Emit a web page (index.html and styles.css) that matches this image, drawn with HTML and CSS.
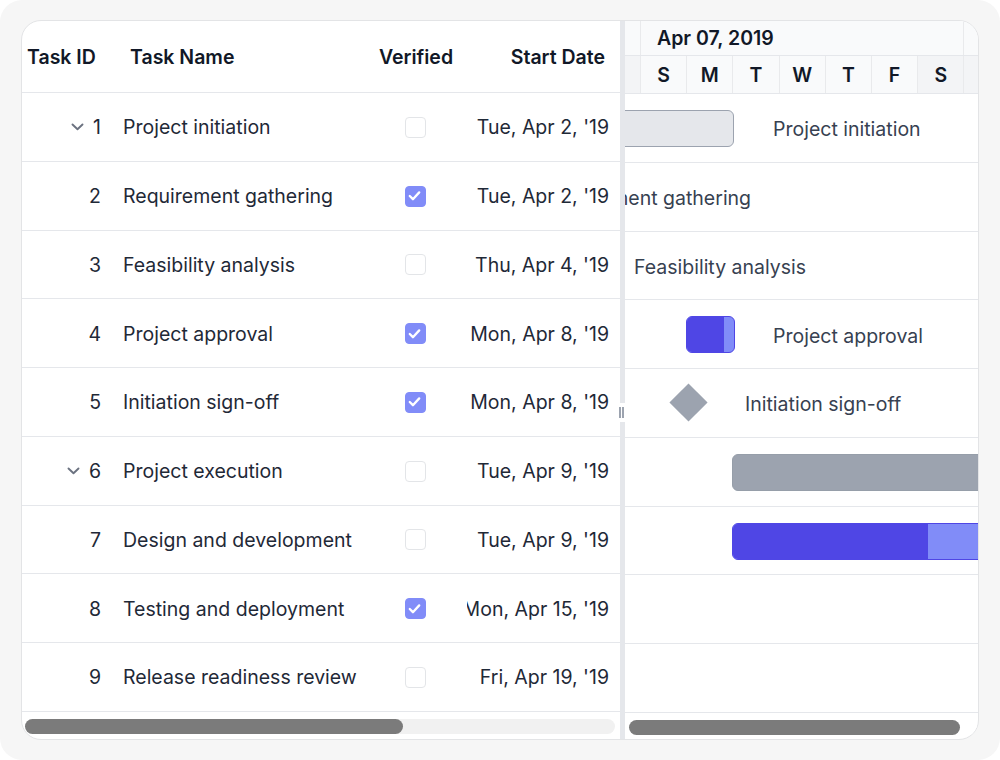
FILE: index.html
```html
<!DOCTYPE html>
<html lang="en">
<head>
<meta charset="UTF-8">
<meta name="viewport" content="width=device-width, initial-scale=1.0">
<title>Project Gantt</title>
<link rel="stylesheet" href="styles.css">
</head>
<body>
    <div class="frame">
        <div class="gantt">
            <div class="grid-pane">
                <div class="grid-head">
                    <div class="col-id">Task ID</div>
                    <div class="col-name">Task Name</div>
                    <div class="col-check">Verified</div>
                    <div class="col-date">Start Date</div>
                </div>

                <div class="grid-row">
                    <div class="col-id"><svg class="chevron" viewBox="0 0 13 8"><path d="M1.5 1.5 L6.5 6.2 L11.5 1.5"/></svg>1</div>
                    <div class="col-name">Project initiation</div>
                    <div class="col-check"><span class="box"></span></div>
                    <div class="col-date"><span>Tue, Apr 2, '19</span></div>
                </div>
                <div class="grid-row">
                    <div class="col-id">2</div>
                    <div class="col-name">Requirement gathering</div>
                    <div class="col-check"><span class="box checked"><svg viewBox="0 0 20 20"><path d="M5.5 10.5 L8.5 13.5 L14.5 7"/></svg></span></div>
                    <div class="col-date"><span>Tue, Apr 2, '19</span></div>
                </div>
                <div class="grid-row">
                    <div class="col-id">3</div>
                    <div class="col-name">Feasibility analysis</div>
                    <div class="col-check"><span class="box"></span></div>
                    <div class="col-date"><span>Thu, Apr 4, '19</span></div>
                </div>
                <div class="grid-row">
                    <div class="col-id">4</div>
                    <div class="col-name">Project approval</div>
                    <div class="col-check"><span class="box checked"><svg viewBox="0 0 20 20"><path d="M5.5 10.5 L8.5 13.5 L14.5 7"/></svg></span></div>
                    <div class="col-date"><span>Mon, Apr 8, '19</span></div>
                </div>
                <div class="grid-row">
                    <div class="col-id">5</div>
                    <div class="col-name">Initiation sign-off</div>
                    <div class="col-check"><span class="box checked"><svg viewBox="0 0 20 20"><path d="M5.5 10.5 L8.5 13.5 L14.5 7"/></svg></span></div>
                    <div class="col-date"><span>Mon, Apr 8, '19</span></div>
                </div>
                <div class="grid-row">
                    <div class="col-id"><svg class="chevron" viewBox="0 0 13 8"><path d="M1.5 1.5 L6.5 6.2 L11.5 1.5"/></svg>6</div>
                    <div class="col-name">Project execution</div>
                    <div class="col-check"><span class="box"></span></div>
                    <div class="col-date"><span>Tue, Apr 9, '19</span></div>
                </div>
                <div class="grid-row">
                    <div class="col-id">7</div>
                    <div class="col-name">Design and development</div>
                    <div class="col-check"><span class="box"></span></div>
                    <div class="col-date"><span>Tue, Apr 9, '19</span></div>
                </div>
                <div class="grid-row">
                    <div class="col-id">8</div>
                    <div class="col-name">Testing and deployment</div>
                    <div class="col-check"><span class="box checked"><svg viewBox="0 0 20 20"><path d="M5.5 10.5 L8.5 13.5 L14.5 7"/></svg></span></div>
                    <div class="col-date"><span>Mon, Apr 15, '19</span></div>
                </div>
                <div class="grid-row">
                    <div class="col-id">9</div>
                    <div class="col-name">Release readiness review</div>
                    <div class="col-check"><span class="box"></span></div>
                    <div class="col-date"><span>Fri, Apr 19, '19</span></div>
                </div>

                <div class="hscroll">
                    <div class="track"><div class="thumb grid-thumb"></div></div>
                </div>
            </div>

            <div class="splitter"><span class="grip"></span></div>

            <div class="chart-pane">
                <div class="chart-head">
                    <div class="tier tier-week">
                        <div class="cell part"></div>
                        <div class="cell week">Apr 07, 2019</div>
                        <div class="cell rest"></div>
                    </div>
                    <div class="tier tier-day">
                        <div class="cell part weekend"></div>
                        <div class="cell day">S</div>
                        <div class="cell day">M</div>
                        <div class="cell day">T</div>
                        <div class="cell day">W</div>
                        <div class="cell day">T</div>
                        <div class="cell day">F</div>
                        <div class="cell day weekend">S</div>
                        <div class="cell rest weekend"></div>
                    </div>
                </div>

                <div class="chart-row">
                    <div class="bar parent-bar" style="left: -12px; width: 121px;"></div>
                    <div class="bar-label" style="left: 148px;">Project initiation</div>
                </div>
                <div class="chart-row">
                    <div class="bar-label" style="left: -84px;">Requirement gathering</div>
                </div>
                <div class="chart-row">
                    <div class="bar-label" style="left: 9px;">Feasibility analysis</div>
                </div>
                <div class="chart-row">
                    <div class="bar task-bar" style="left: 61px; width: 49px;"><div class="progress" style="width: 78%;"></div></div>
                    <div class="bar-label" style="left: 148px;">Project approval</div>
                </div>
                <div class="chart-row">
                    <div class="milestone" style="left: 50px;"></div>
                    <div class="bar-label" style="left: 120px;">Initiation sign-off</div>
                </div>
                <div class="chart-row">
                    <div class="bar summary-bar" style="left: 107px; width: 300px;"></div>
                </div>
                <div class="chart-row">
                    <div class="bar task-bar" style="left: 107px; width: 300px;"><div class="progress" style="width: 195px;"></div></div>
                </div>
                <div class="chart-row"></div>
                <div class="chart-row"></div>

                <div class="hscroll">
                    <div class="track chart-track"><div class="thumb chart-thumb"></div></div>
                </div>
            </div>
        </div>
    </div>
</body>
</html>
```

FILE: styles.css
```css
body {
    margin: 0;
    background-color: #fff;
    font-family: Inter, "Noto Sans", sans-serif;
    color: #1f2937;
}
.frame {
    width: 1000px;
    height: 760px;
    box-sizing: border-box;
    padding: 20px 21px 20px 21px;
    background-color: #f6f6f6;
    border-radius: 22px;
}
.gantt {
    display: flex;
    height: 100%;
    box-sizing: border-box;
    background-color: #fff;
    border: 1px solid #e3e4e6;
    border-radius: 20px;
    overflow: hidden;
}

/* left grid */
.grid-pane {
    width: 598px;
    display: flex;
    flex-direction: column;
}
.grid-head,
.grid-row {
    display: flex;
    box-sizing: border-box;
    border-bottom: 1px solid #e5e7eb;
}
.grid-head {
    height: 72px;
    font-size: 19.5px;
    font-weight: 600;
    color: #111827;
}
.grid-row {
    height: 68.75px;
    padding-top: 1px;
    font-size: 19.5px;
}
.grid-head > div,
.grid-row > div {
    display: flex;
    align-items: center;
    box-sizing: border-box;
}
.col-id {
    width: 90px;
    justify-content: flex-end;
    padding-right: 11px;
}
.col-name {
    width: 258px;
    padding-left: 11px;
    white-space: nowrap;
}
.col-check {
    width: 92px;
    justify-content: center;
}
.col-date {
    width: 158px;
    justify-content: flex-end;
    padding: 0 11px 0 5px;
}
.grid-row .col-date span {
    display: flex;
    justify-content: flex-end;
    width: 100%;
    overflow: hidden;
    white-space: nowrap;
}
.grid-head .col-id {
    justify-content: flex-start;
    padding: 0 0 0 5px;
}
.grid-head .col-name {
    padding-left: 18px;
}
.grid-head .col-date {
    padding-right: 15px;
}
.chevron {
    width: 13px;
    height: 8px;
    margin-right: 9px;
    fill: none;
    stroke: #6b7280;
    stroke-width: 1.9;
    stroke-linecap: round;
    stroke-linejoin: round;
}
.box {
    width: 21px;
    height: 21px;
    box-sizing: border-box;
    border: 1.5px solid #e3e5e8;
    border-radius: 4px;
    margin-left: -2px;
}
.box.checked {
    border-color: #818cf8;
    background-color: #818cf8;
}
.box svg {
    display: block;
    margin: -1.5px;
    width: 21px;
    height: 21px;
    fill: none;
    stroke: #fff;
    stroke-width: 2.2;
    stroke-linecap: round;
    stroke-linejoin: round;
}

/* scrollbars */
.hscroll {
    flex: 1;
    padding-top: 7px;
}
.track {
    height: 15px;
    margin: 0 5px 0 3px;
    background-color: #f1f1f1;
    border-radius: 8px;
}
.thumb {
    height: 15px;
    background-color: #7b7b7b;
    border-radius: 8px;
}
.grid-thumb {
    width: 378px;
}
.chart-track {
    margin: 0 0 0 4px;
    background-color: #fff;
}
.chart-thumb {
    width: 331px;
}

/* splitter */
.splitter {
    position: relative;
    width: 5px;
    background-color: #e5e7eb;
}
.grip {
    position: absolute;
    left: -3px;
    top: 382px;
    width: 9px;
    height: 19px;
    background-color: #fff;
}
.grip::before,
.grip::after {
    content: "";
    position: absolute;
    top: 4px;
    width: 1.5px;
    height: 11px;
    background-color: #9ca3af;
}
.grip::before {
    left: 2px;
}
.grip::after {
    left: 5px;
}

/* timeline */
.chart-pane {
    flex: 1;
    display: flex;
    flex-direction: column;
    overflow: hidden;
}
.chart-head {
    background-color: #f9fafb;
    border-bottom: 1px solid #e5e7eb;
    font-size: 19.5px;
    font-weight: 600;
    color: #111827;
}
.tier {
    display: flex;
}
.tier-week {
    height: 34px;
    border-bottom: 1px solid #e5e7eb;
}
.tier-day {
    height: 37px;
}
.cell {
    display: flex;
    align-items: center;
    box-sizing: border-box;
    border-right: 1px solid #e9eaec;
}
.cell.part {
    width: 16px;
}
.cell.week {
    width: 323.4px;
    padding-left: 16px;
}
.cell.day {
    width: 46.2px;
    justify-content: center;
}
.cell.rest {
    flex: 1;
    border-right: none;
}
.weekend {
    background-color: #f3f4f6;
}
.chart-row {
    position: relative;
    height: 68.75px;
    box-sizing: border-box;
    border-bottom: 1px solid #e5e7eb;
}
.bar {
    position: absolute;
    top: 16px;
    height: 37px;
    box-sizing: border-box;
    border-radius: 6px;
    overflow: hidden;
}
.parent-bar {
    background-color: #e5e7eb;
    border: 1px solid #9ca3af;
}
.summary-bar {
    background-color: #9ca3af;
    border: 1px solid #969ea9;
}
.task-bar {
    background-color: #818cf8;
    border: 1px solid #4f46e5;
}
.progress {
    height: 100%;
    background-color: #4f46e5;
}
.milestone {
    position: absolute;
    top: 20px;
    width: 27px;
    height: 27px;
    background-color: #9ca3af;
    transform: rotate(45deg);
}
.bar-label {
    position: absolute;
    top: 3px;
    bottom: 0;
    display: flex;
    align-items: center;
    font-size: 19.5px;
    color: #374151;
    white-space: nowrap;
}
```
